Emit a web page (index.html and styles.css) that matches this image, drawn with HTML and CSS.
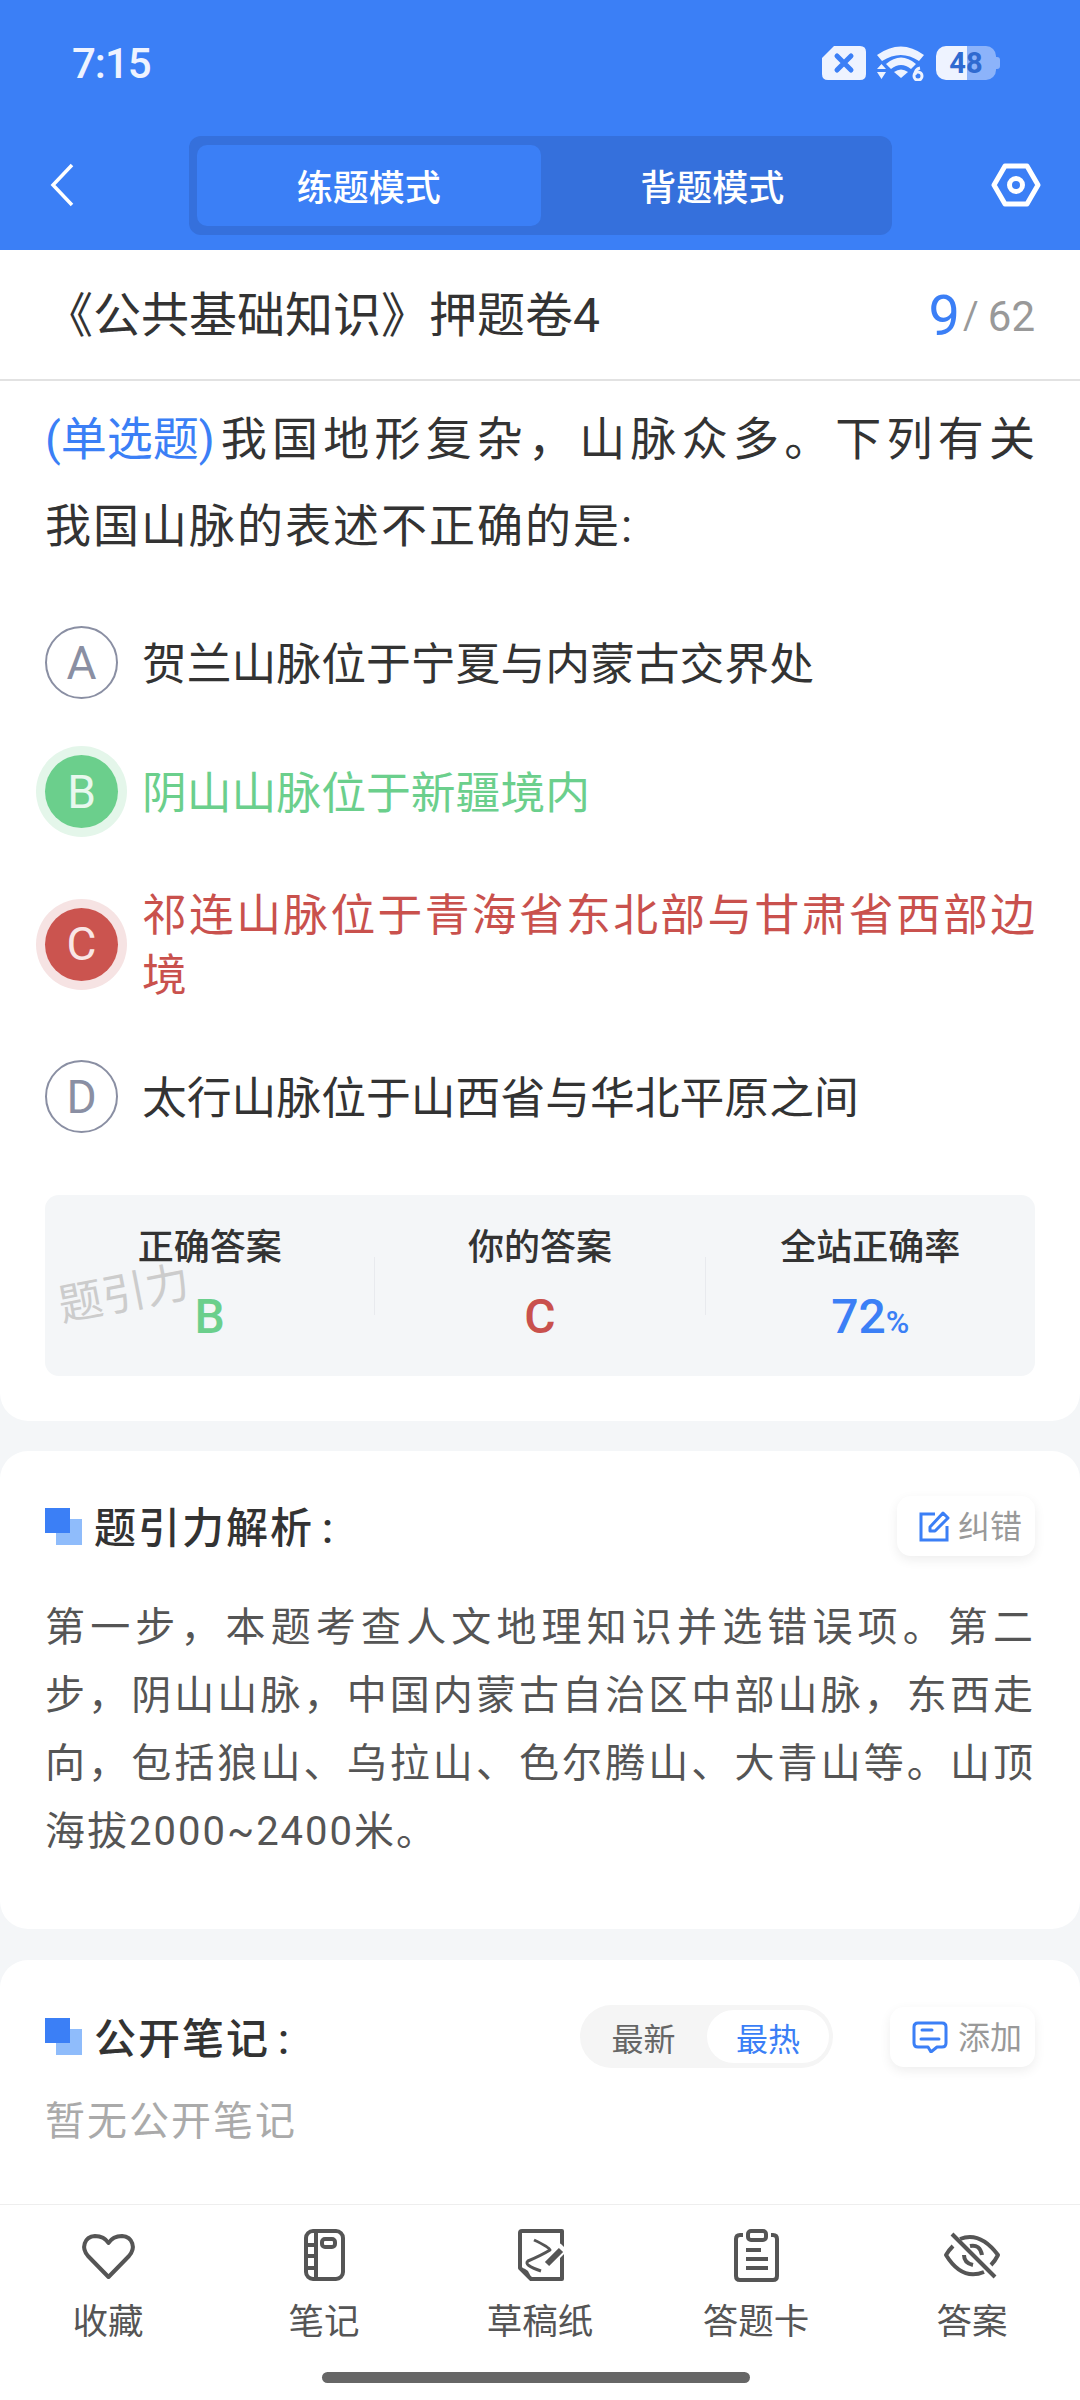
FILE: index.html
```html
<!DOCTYPE html>
<html lang="zh-CN">

<head>
    <meta charset="UTF-8">
    <title>练题模式</title>
    <link rel="stylesheet" href="styles.css">
</head>

<body>
    <div class="screen">
        <header class="header">
            <div class="status">
                <span class="time">7:15</span>
                <div class="status-icons">
                    <svg class="sim" viewBox="0 0 44 34" width="44" height="34">
                        <path d="M12 0H38Q44 0 44 6V28Q44 34 38 34H6Q0 34 0 28V12Z" fill="#eef3ff" />
                        <path d="M15 10L29 24M29 10L15 24" stroke="#3b7ff6" stroke-width="5" stroke-linecap="round" />
                    </svg>
                    <svg class="wifi" viewBox="0 0 48 36" width="48" height="36">
                        <path d="M0 10Q24 -7 47 10L42 16Q24 4 5 16Z" fill="#eef3ff" />
                        <path d="M9 19Q24 6 39 19L34 24Q24 16 14 24Z" fill="#eef3ff" />
                        <path d="M17 27Q24 22 31 27L24 33Z" fill="#eef3ff" />
                        <path d="M4.500 19L9 24H0ZM0 27H9L4.500 34Z" fill="#eef3ff" />
                        <circle cx="41" cy="31" r="4" fill="none" stroke="#eef3ff" stroke-width="3" />
                        <path d="M38 30Q38 24 43 23" fill="none" stroke="#eef3ff" stroke-width="3" />
                    </svg>
                    <div class="battery">
                        <span class="battery-body">48</span>
                        <span class="battery-nub"></span>
                    </div>
                </div>
            </div>
            <div class="navbar">
                <div class="nav-back">
                    <svg viewBox="0 0 24 44" width="24" height="44">
                        <path d="M22 2L3 22L22 42" fill="none" stroke="#fff" stroke-width="3.5" />
                    </svg>
                </div>
                <div class="segment">
                    <div class="segment-item active">练题模式</div>
                    <div class="segment-item">背题模式</div>
                </div>
                <div class="nav-setting">
                    <svg viewBox="0 0 50 44" width="50" height="44">
                        <path d="M14 3H36L47 22L36 41H14L3 22Z" fill="none" stroke="#fff" stroke-width="5" stroke-linejoin="round" />
                        <circle cx="25" cy="22" r="6.5" fill="none" stroke="#fff" stroke-width="5" />
                    </svg>
                </div>
            </div>
        </header>

        <section class="card question-card">
            <div class="paper-title">
                <span class="paper-name">《公共基础知识》押题卷4</span>
                <span class="paper-count"><b>9</b><i>/</i>62</span>
            </div>
            <div class="question">
                <p class="question-line"><span class="question-type">(单选题)</span><span>我国地形复杂，山脉众多。下列有关</span></p>
                <p>我国山脉的表述不正确的是:</p>
            </div>
            <div class="options">
                <div class="option">
                    <span class="option-letter">A</span>
                    <span class="option-text">贺兰山脉位于宁夏与内蒙古交界处</span>
                </div>
                <div class="option right">
                    <span class="option-letter">B</span>
                    <span class="option-text">阴山山脉位于新疆境内</span>
                </div>
                <div class="option wrong">
                    <span class="option-letter">C</span>
                    <span class="option-text">祁连山脉位于青海省东北部与甘肃省西部边境</span>
                </div>
                <div class="option">
                    <span class="option-letter">D</span>
                    <span class="option-text">太行山脉位于山西省与华北平原之间</span>
                </div>
            </div>
            <div class="summary">
                <div class="summary-cell">
                    <div class="summary-label">正确答案</div>
                    <div class="summary-value green">B</div>
                </div>
                <div class="summary-line"></div>
                <div class="summary-cell">
                    <div class="summary-label">你的答案</div>
                    <div class="summary-value red">C</div>
                </div>
                <div class="summary-line"></div>
                <div class="summary-cell">
                    <div class="summary-label">全站正确率</div>
                    <div class="summary-value blue">72<small>%</small></div>
                </div>
                <div class="watermark">题引力</div>
            </div>
        </section>

        <section class="card analysis-card">
            <div class="card-head">
                <h2 class="card-title"><span class="title-mark"></span><span class="title-text">题引力解析<span class="colon">:</span></span></h2>
                <div class="small-btn">
                    <svg viewBox="0 0 32 32" width="32" height="32">
                        <path d="M17 4H3V30H29V16" fill="none" stroke="#3b7ff6" stroke-width="3" />
                        <path d="M12 17L25 3L30 8L17 21H12Z" fill="none" stroke="#3b7ff6" stroke-width="3" stroke-linejoin="round" />
                    </svg>
                    <span class="btn-text">纠错</span>
                </div>
            </div>
            <p class="analysis">第一步，本题考查人文地理知识并选错误项。第二步，阴山山脉，中国内蒙古自治区中部山脉，东西走向，包括狼山、乌拉山、色尔腾山、大青山等。山顶海拔2000~2400米。</p>
        </section>

        <section class="card notes-card">
            <div class="card-head">
                <h2 class="card-title"><span class="title-mark"></span><span class="title-text">公开笔记<span class="colon">:</span></span></h2>
                <div class="sort-toggle">
                    <span class="sort-item">最新</span>
                    <span class="sort-item active">最热</span>
                </div>
                <div class="small-btn add">
                    <svg viewBox="0 0 36 32" width="36" height="32">
                        <path d="M6 2H30Q34 2 34 6V22Q34 26 30 26H25L19 31L16 26H6Q2 26 2 22V6Q2 2 6 2Z" fill="none" stroke="#3b7ff6" stroke-width="3" stroke-linejoin="round" />
                        <path d="M10 9H20M9 18H27" stroke="#3b7ff6" stroke-width="3" stroke-linecap="round" />
                    </svg>
                    <span class="btn-text">添加</span>
                </div>
            </div>
            <p class="empty-note">暂无公开笔记</p>
        </section>

        <footer class="bottom">
            <nav class="tabs">
                <div class="tab">
                    <svg viewBox="0 0 60 60" width="60" height="60">
                        <path d="M30.500 52L10 31C3 23 6 12 17 11C23 11 28 14 30.500 18C33 14 38 11 44 11C55 12 58 23 51 31Z" class="ico" />
                    </svg>
                    <span>收藏</span>
                </div>
                <div class="tab">
                    <svg viewBox="0 0 60 60" width="60" height="60">
                        <rect x="12" y="6" width="37" height="48" rx="7" class="ico" />
                        <path d="M22 6V54M12 20H22M12 31H22M12 43H22" class="ico" />
                        <rect x="28" y="14" width="13" height="8" rx="3" class="ico" />
                    </svg>
                    <span>笔记</span>
                </div>
                <div class="tab">
                    <svg viewBox="0 0 60 60" width="60" height="60">
                        <path d="M12 6H52V54H21L10 43V8Q10 6 12 6Z" class="ico" />
                        <path d="M10 43Q19 42 21 54Z" class="ico-fill" />
                        <path d="M24 15Q39 22 40 25Q32 30 18 36Q13 40 31 46" class="ico thin" />
                        <path d="M35 41L54 22" class="pencil-gap" />
                        <path d="M37 39L51 25" class="ico thick" />
                    </svg>
                    <span>草稿纸</span>
                </div>
                <div class="tab">
                    <svg viewBox="0 0 60 60" width="60" height="60">
                        <path d="M17 10H14Q10 10 10 14V51Q10 55 14 55H47Q51 55 51 51V14Q51 10 47 10H45" class="ico" />
                        <rect x="22" y="6" width="18" height="9" rx="3" class="ico" />
                        <path d="M20 25H35M20 34H42M20 43H42" class="ico" />
                    </svg>
                    <span>答题卡</span>
                </div>
                <div class="tab">
                    <svg viewBox="0 0 60 60" width="60" height="60">
                        <path d="M18 14Q38 6 56 30Q53 36 49 40M11 21Q7 25 4 30Q20 56 42 47" class="ico" />
                        <path d="M28 21Q38 19 40 30M22 30Q22 38 31 40" class="ico" />
                        <path d="M10 9L53 52" class="ico" />
                    </svg>
                    <span>答案</span>
                </div>
            </nav>
            <div class="home-bar"></div>
        </footer>
    </div>
</body>

</html>
```

FILE: styles.css
```css
/* page */
* {
    box-sizing: border-box;
}

body {
    margin: 0;
    font-family: Roboto, "Noto Sans CJK SC", sans-serif;
    color: #333333;
}

p,
h2 {
    margin: 0;
}

.screen {
    width: 1080px;
    height: 2400px;
    display: flex;
    flex-direction: column;
    overflow: hidden;
    background-color: #f4f6f8;
}

/* blue header */
.header {
    height: 250px;
    flex: none;
    background-color: #3b7ff6;
}

.status {
    height: 126px;
    display: flex;
    align-items: center;
    justify-content: space-between;
    padding: 0 80px 0 72px;
}

.time {
    font-size: 42px;
    font-weight: 500;
    letter-spacing: -1px;
    color: #eef3ff;
}

.status-icons {
    display: flex;
    align-items: center;
    gap: 11px;
}

.battery {
    display: flex;
    align-items: center;
}

.battery-body {
    width: 60px;
    height: 34px;
    border-radius: 10px;
    display: flex;
    align-items: center;
    justify-content: center;
    font-size: 29px;
    font-weight: 700;
    color: #2f6ad0;
    background: linear-gradient(90deg, #eef3ff 52%, #8cb3fa 52%);
}

.battery-nub {
    width: 4px;
    height: 12px;
    border-radius: 0 3px 3px 0;
    background-color: #8cb3fa;
}

.navbar {
    height: 118px;
    display: grid;
    grid-template-columns: 189px 703px 1fr;
    align-items: center;
}

.nav-back {
    padding-left: 50px;
    display: flex;
}

.nav-setting {
    padding-left: 99px;
    display: flex;
}

.segment {
    height: 99px;
    padding: 9px 8px;
    display: flex;
    border-radius: 12px;
    background-color: #3570dc;
}

.segment-item {
    flex: 1;
    display: flex;
    align-items: center;
    justify-content: center;
    font-size: 36px;
    font-weight: 500;
    color: #ffffff;
    border-radius: 10px;
}

.segment-item.active {
    background-color: #3b7ff6;
}

/* cards */
.card {
    flex: none;
    background-color: #ffffff;
    border-radius: 28px;
    padding: 0 45px;
}

.question-card {
    border-radius: 0 0 28px 28px;
    height: 1171px;
    margin-bottom: 30px;
}

.paper-title {
    height: 131px;
    margin: 0 -45px;
    padding: 3px 45px 0;
    display: flex;
    align-items: center;
    justify-content: space-between;
    border-bottom: 2px solid #e2e2e2;
}

.paper-name {
    font-size: 48px;
    line-height: 60px;
    color: #333333;
}

.paper-count {
    display: flex;
    align-items: center;
    font-size: 42px;
    color: #999999;
}

.paper-count b {
    font-size: 56px;
    font-weight: 400;
    color: #3b7ff6;
}

.paper-count i {
    font-style: normal;
    font-size: 38px;
    margin: 0 9px 0 3px;
}

.question {
    margin: 15px -2px 0 0;
    font-size: 46px;
    letter-spacing: 2px;
    line-height: 87px;
}

.question-line {
    display: flex;
    justify-content: space-between;
}

.question-line span:last-child {
    flex: 1;
    margin-left: 6px;
    text-align: justify;
    text-align-last: justify;
}

.question-type {
    color: #3b7ff6;
    letter-spacing: 0;
}

.options {
    margin-top: 56px;
    display: flex;
    flex-direction: column;
    gap: 56px;
}

.option {
    min-height: 73px;
    display: flex;
    align-items: center;
    gap: 24px;
}

.option-letter {
    width: 73px;
    height: 73px;
    flex: none;
    display: flex;
    align-items: center;
    justify-content: center;
    border: 2px solid #8a8fa3;
    border-radius: 50%;
    font-size: 46px;
    color: #8a8fa3;
}

.option-text {
    flex: 1;
    padding-top: 2px;
    margin-bottom: -2px;
    font-size: 44.8px;
    line-height: 60px;
    text-align: justify;
}

.option.right .option-letter {
    border: none;
    color: #e8f8ee;
    background-color: #6bcf8c;
    box-shadow: 0 0 0 9px #e4f6ea;
}

.option.right .option-text {
    color: #6bcf8c;
}

.option.wrong .option-letter {
    border: none;
    color: #f9e6e6;
    background-color: #cb544f;
    box-shadow: 0 0 0 9px #f6e3e3;
}

.option.wrong .option-text {
    color: #c9514d;
}

/* answer summary */
.summary {
    position: relative;
    height: 181px;
    margin-top: 62px;
    display: flex;
    border-radius: 14px;
    background-color: #f4f6f8;
}

.summary-cell {
    flex: 1;
    padding-top: 31px;
    text-align: center;
}

.summary-line {
    width: 1px;
    height: 58px;
    margin-top: 62px;
    background-color: #e8eaee;
}

.summary-label {
    font-size: 36px;
    line-height: 44px;
    font-weight: 500;
}

.summary-value {
    margin-top: 22px;
    font-size: 48px;
    line-height: 50px;
    font-weight: 500;
}

.summary-value small {
    font-size: 32px;
}

.green {
    color: #6bcf8c;
}

.red {
    color: #c9514d;
}

.blue {
    color: #3b7ff6;
}

.watermark {
    position: absolute;
    left: 13px;
    top: 74px;
    font-size: 44px;
    line-height: 50px;
    color: #cccccc;
    transform: rotate(-11deg);
}

/* analysis + notes */
.analysis-card {
    height: 478px;
    padding-top: 45px;
    margin-bottom: 31px;
}

.notes-card {
    height: 244px;
    padding-top: 45px;
    border-radius: 28px 28px 0 0;
}

.card-head {
    display: flex;
    align-items: center;
}

.card-title {
    flex: 1;
    display: flex;
    align-items: center;
    font-size: 42px;
    font-weight: 500;
    letter-spacing: 2px;
    line-height: 54px;
}

.title-text {
    padding-top: 6px;
}

.colon {
    margin-left: 8px;
}

.title-mark {
    position: relative;
    width: 37px;
    height: 37px;
    margin-right: 12px;
}

.title-mark::before {
    content: "";
    position: absolute;
    left: 11px;
    top: 11px;
    width: 26px;
    height: 26px;
    background-color: #8fbcfb;
}

.title-mark::after {
    content: "";
    position: absolute;
    left: 0;
    top: 0;
    width: 25px;
    height: 25px;
    background-color: #3b7ff6;
}

.small-btn {
    height: 60px;
    padding: 0 13px 0 21px;
    display: flex;
    align-items: center;
    gap: 8px;
    font-size: 32px;
    color: #999999;
    background-color: #ffffff;
    border-radius: 14px;
    box-shadow: 0 4px 12px rgba(0, 0, 0, 0.07);
}

.small-btn.add {
    padding-left: 22px;
    gap: 10px;
}

.btn-text {
    padding-bottom: 4px;
}

.analysis {
    margin-top: 38px;
    font-size: 40px;
    letter-spacing: 2px;
    line-height: 68px;
    color: #555555;
    text-align: justify;
}

.sort-toggle {
    width: 253px;
    height: 63px;
    margin-right: 57px;
    padding: 5px 4px 5px 0;
    display: flex;
    border-radius: 32px;
    background-color: #f5f5f5;
}

.sort-item {
    flex: 1;
    display: flex;
    align-items: center;
    justify-content: center;
    font-size: 32px;
    color: #666666;
    border-radius: 27px;
}

.sort-item.active {
    flex: none;
    width: 122px;
    color: #3b7ff6;
    background-color: #ffffff;
}

.empty-note {
    margin-top: 24px;
    font-size: 40px;
    letter-spacing: 2px;
    line-height: 60px;
    color: #aaaaaa;
}

/* bottom bar */
.bottom {
    flex: 1;
    border-top: 1px solid #eeeeee;
    background-color: #ffffff;
}

.tabs {
    padding-top: 20px;
    display: grid;
    grid-template-columns: repeat(5, 1fr);
}

.tab {
    display: flex;
    flex-direction: column;
    align-items: center;
    gap: 15px;
    font-size: 35.5px;
    line-height: 44px;
    color: #555555;
}

.ico {
    fill: none;
    stroke: #555555;
    stroke-width: 4;
    stroke-linejoin: round;
}

.ico-fill {
    fill: #555555;
}

.ico.thin {
    stroke-width: 3;
}

.ico.thick {
    stroke-width: 6;
}

.pencil-gap {
    fill: none;
    stroke: #ffffff;
    stroke-width: 10;
}

.home-bar {
    width: 428px;
    height: 11px;
    margin: 28px 0 0 322px;
    border-radius: 6px;
    background-color: #666666;
}
```
